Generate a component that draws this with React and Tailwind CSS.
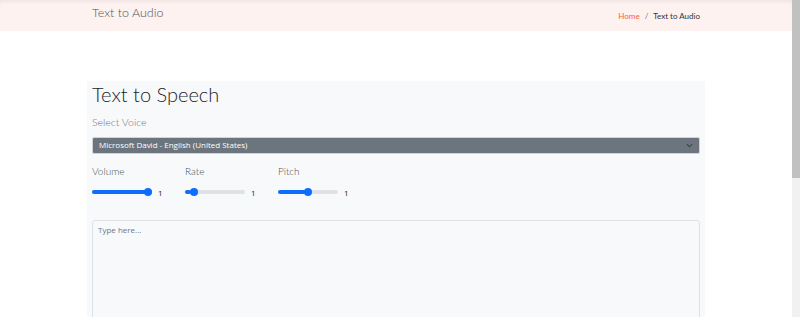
import React from 'react';

/* ── Slider (drawn) ── */
function Slider({ label, pct }) {
    return (
        <div className="w-[93px]">
            <p className="text-[10px] leading-none text-[#495057] font-['Lato',sans-serif] font-light">{label}</p>
            <div className="flex items-center mt-[9px]">
                <div className="relative w-[60px] h-[4px] rounded-full bg-[#dee2e6]">
                    <div className="h-full rounded-full bg-[#0d6efd]" style={{ width: `${pct}%` }} />
                    <div
                        className="absolute top-1/2 w-[8px] h-[8px] -mt-[4px] -ml-[4px] rounded-full bg-[#0d6efd]"
                        style={{ left: `calc(4px + ${pct}% * 0.866)` }}
                    />
                </div>
                <span className="ml-[6px] mt-[2px] text-[8px] text-[#212529] font-['Open_Sans',sans-serif]">1</span>
            </div>
        </div>
    );
}

export default function App() {
    return (
        <div className="h-[317px] overflow-hidden flex bg-white">
            <div className="flex-1">
                {/* ── Header band ── */}
                <div className="h-[31px] bg-[#fdf2ef] shadow-[inset_0_4px_4px_-2px_rgba(0,0,0,0.06)] flex items-center justify-between pl-[92px] pr-[92px]">
                    <span className="text-[12.5px] text-[#555] font-['Lato',sans-serif] font-light -mt-[5px]">Text to Audio</span>
                    <span className="text-[8px] font-['Lato',sans-serif]">
                        <span className="text-[#f4623a]">Home</span>
                        <span className="text-[#6c757d] mx-[5px]">/</span>
                        <span className="text-[#333]">Text to Audio</span>
                    </span>
                </div>

                {/* ── Panel ── */}
                <div className="mt-[50px] ml-[87px] w-[618px] bg-[#f8f9fa] px-[5px] pb-4">
                    <h1 className="pt-[1px] text-[20px] leading-[24px] text-[#212529] font-['Lato',sans-serif] font-light">Text to Speech</h1>
                    <p className="mt-[11px] text-[10.5px] leading-none text-[#6c757d] font-['Lato',sans-serif] font-light">Select Voice</p>
                    <div className="mt-[9px] h-[17px] rounded-[2px] bg-[#6c757d] border border-[#cfd4da] flex items-center justify-between px-[6px]">
                        <span className="text-[8px] text-white font-['Open_Sans',sans-serif]">Microsoft David - English (United States)</span>
                        <svg width="7" height="5" viewBox="0 0 8 5" fill="none" stroke="#3a4047" strokeWidth="1.2">
                            <path d="M1 1l3 3 3-3" />
                        </svg>
                    </div>

                    <div className="flex mt-[12px]">
                        <Slider label="Volume" pct={100} />
                        <Slider label="Rate" pct={10} />
                        <Slider label="Pitch" pct={50} />
                    </div>

                    <div className="mt-[21px] h-[240px] rounded-[3px] border border-[#dee2e6] bg-[#f8f9fa] px-[5px] py-[5px]">
                        <p className="text-[8px] leading-none text-[#6c757d] font-['Open_Sans',sans-serif]">Type here...</p>
                    </div>
                </div>
            </div>

            {/* ── Scrollbar ── */}
            <div className="w-[8px] flex flex-col bg-[#f1f1f1]">
                <div className="h-[178px] bg-[#c1c1c1]" />
            </div>
        </div>
    );
}
